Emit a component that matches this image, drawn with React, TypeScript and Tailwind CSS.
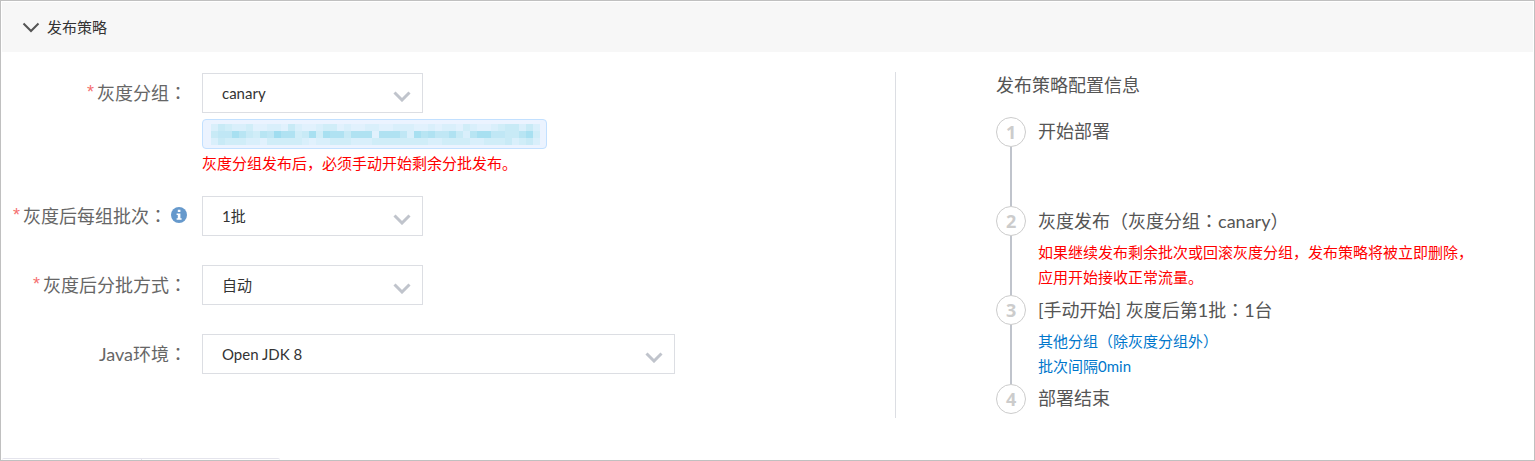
import { useId, useState, type ReactNode } from 'react';

// Tile shades of the masked text, one digit per tile
const MASK_ROWS = [
  '24322311221421123312112211222112122132112344242',
  '45586436597734838774777177752867557426885544683',
  '24333221333332122333222333333332233332233342342',
];

const SHADES = [
  '#ebf3ff', '#e1f1fd', '#d9effb', '#d0edf8', '#c8eaf6',
  '#c0e7f5', '#b8e5f3', '#b0e2f2', '#a8e0f1', '#a0ddf0',
];

interface Step {
  title: ReactNode;
  lines?: string[];
  tone?: string;
}

const steps: Step[] = [
  { title: '开始部署' },
  {
    title: <>灰度发布（灰度分组<Colon />canary）</>,
    lines: ['如果继续发布剩余批次或回滚灰度分组，发布策略将被立即删除，应用开始接收正常流量。'],
    tone: 'text-[#ff0000]',
  },
  {
    title: <>[手动开始] 灰度后第1批<Colon />1台</>,
    lines: ['其他分组（除灰度分组外）', '批次间隔0min'],
    tone: 'text-[#0077cc]',
  },
  { title: '部署结束' },
];

// The Japanese face centres the full-width colon
function Colon() {
  return <span className="font-['Noto_Sans_CJK_JP',sans-serif]">：</span>;
}

function Chevron({ className }: { className: string }) {
  return (
    <svg viewBox="0 0 18 11" className={className} fill="none" stroke="currentColor" aria-hidden="true">
      <path d="M1.5 1.5 9 9l7.5-7.5" />
    </svg>
  );
}

function InfoIcon() {
  return (
    <svg viewBox="0 0 16 16" className="ml-1 size-4 shrink-0" aria-hidden="true">
      <circle cx="8" cy="8" r="8" fill="#6699cc" />
      <path d="M6.8 2.8h2.6v2.1H6.8zM5.6 6.4h3.8v4.9h1.2v1.5H5.6v-1.5h1.2V7.9H5.6z" fill="#fff" />
    </svg>
  );
}

interface FieldProps {
  label: string;
  options: string[];
  required?: boolean;
  info?: boolean;
  wide?: boolean;
  children?: ReactNode;
}

function Field({ label, options, required, info, wide, children }: FieldProps) {
  const id = useId();

  return (
    <div className="flex gap-[15px]">
      <label htmlFor={id} className="flex h-[38px] w-[185px] shrink-0 items-center justify-end text-lg text-[#666]">
        {required && <span className="mr-[3px] font-['Liberation_Sans',sans-serif] text-[#f57070]">*</span>}
        <span>{label}<Colon /></span>
        {info && <InfoIcon />}
      </label>
      <div className="min-w-0 flex-1">
        <div className={`relative ${wide ? 'max-w-[473px]' : 'max-w-[221px]'}`}>
          <select
            id={id}
            className="block h-10 w-full appearance-none border border-[#dcdee3] bg-white pl-[19px] pr-9 text-[15px] text-[#333] focus:outline-none focus:border-[#a0a2ad]"
          >
            {options.map(o => <option key={o}>{o}</option>)}
          </select>
          <Chevron className="pointer-events-none absolute right-3 top-[18px] h-[11px] w-[18px] stroke-3 text-[#c0c4cc]" />
        </div>
        {children}
      </div>
    </div>
  );
}

export default function App() {
  const [open, setOpen] = useState(true);

  return (
    <div className="flex min-h-screen flex-col border border-[#c0c0c0] bg-white px-px pt-px font-['Lato','Noto_Sans_CJK_SC',sans-serif]">
      <button
        type="button"
        aria-expanded={open}
        onClick={() => setOpen(!open)}
        className="flex h-[50px] w-full items-center gap-[7px] bg-[#f7f7f7] pl-5 text-left text-[15px] text-[#333]"
      >
        <Chevron className={`h-[11px] w-[18px] stroke-2 text-[#555] ${open ? '' : '-rotate-90'}`} />
        发布策略
      </button>

      {open && (
        <div className="grid grid-cols-[7fr_5fr] pt-5">
          {/* Strategy form */}
          <div className="flex flex-col pt-px">
            <Field label="灰度分组" options={['canary']} required>
              <div className="mt-[6px] h-[30px] max-w-[345px] rounded border border-[#c2e0ff] bg-[#ebf3ff] px-2 py-1">
                {MASK_ROWS.map((row, r) => (
                  <div key={r} className="flex h-[7px]">
                    {row.split('').map((c, i) => (
                      <span key={i} className="w-[7px] shrink-0" style={{ backgroundColor: SHADES[Number(c)] }} />
                    ))}
                  </div>
                ))}
              </div>
              <p className="mt-0.5 text-[15px] leading-[25px] text-[#ff0000]">灰度分组发布后，必须手动开始剩余分批发布。</p>
            </Field>
            <div className="mt-5 flex flex-col gap-[29px]">
              <Field label="灰度后每组批次" options={['1批', '2批', '3批']} required info />
              <Field label="灰度后分批方式" options={['自动', '手动']} required />
              <Field label="Java环境" options={['Open JDK 8', 'Open JDK 7']} wide />
            </div>
          </div>

          {/* Summary of the release steps */}
          <div className="border-l border-[#dcdee3] pl-[100px] pr-6 text-[#555]">
            <h2 className="text-lg leading-[26px]">发布策略配置信息</h2>
            <ol className="mt-[19px]">
              {steps.map((step, i) => {
                const last = i === steps.length - 1;
                return (
                  <li key={i} className={`flex gap-3 ${last ? 'pb-1' : 'min-h-[89px]'}`}>
                    <div className="flex flex-col items-center">
                      <span className="flex size-[30px] items-center justify-center rounded-full border border-[#ccc] font-['Open_Sans',sans-serif] text-lg font-bold text-[#ccc]">
                        {i + 1}
                      </span>
                      {!last && <span className="w-0.5 flex-1 bg-[#c0c4cc]" />}
                    </div>
                    <div className="min-w-0 max-w-[440px]">
                      <h3 className="text-lg leading-[29px]">{step.title}</h3>
                      {step.lines?.map((line, n) => (
                        <p key={line} className={`text-[15px] leading-[25px] ${n === 0 ? 'mt-1' : ''} ${step.tone}`}>
                          {line}
                        </p>
                      ))}
                    </div>
                  </li>
                );
              })}
            </ol>
          </div>
        </div>
      )}

      {/* Top edge of the footer button group */}
      <div className="mt-auto flex h-0.5 w-[278px]">
        <div className="flex-1 rounded-tl border-t border-r border-[#e4e4ec]" />
        <div className="flex-1 rounded-tr border-t border-[#e4e4ec]" />
      </div>
    </div>
  );
}
